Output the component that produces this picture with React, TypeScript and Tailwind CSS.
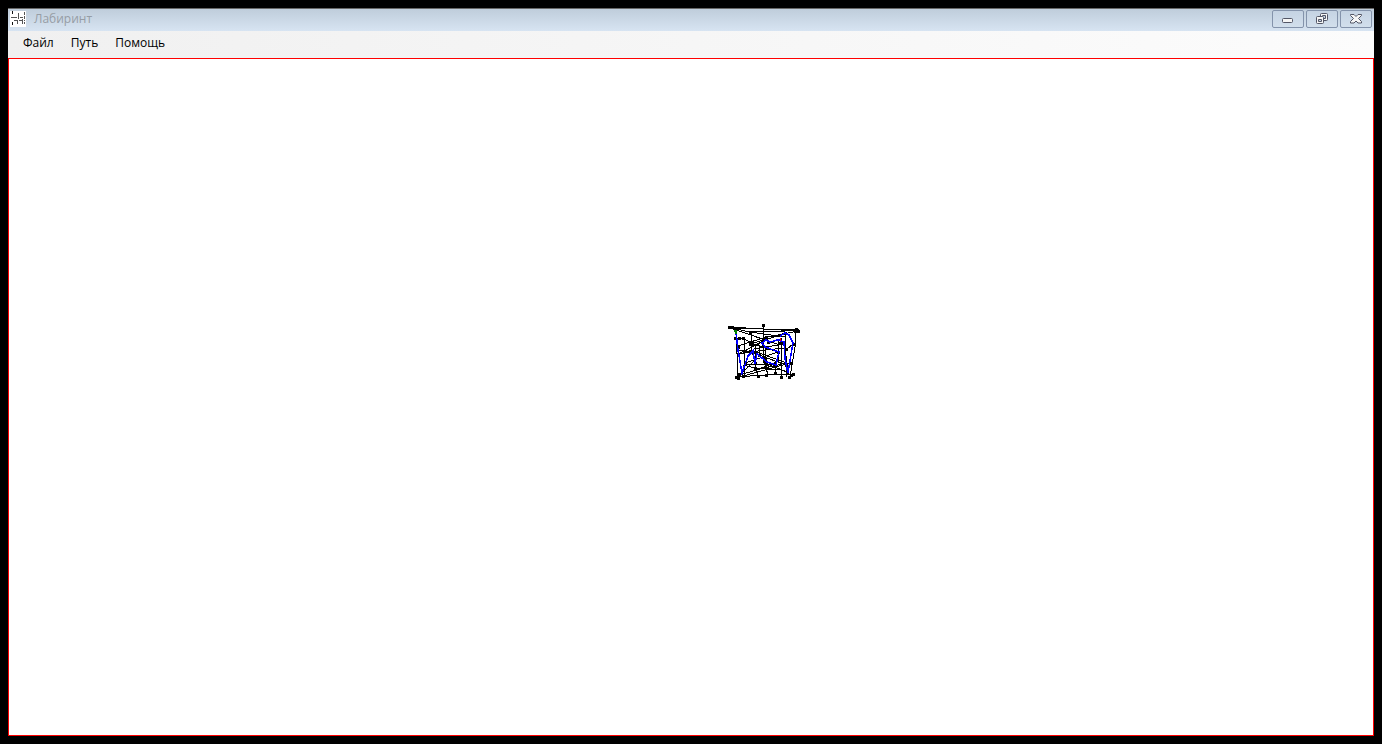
import React from "react";

type Point = [number, number];

const nodes: Point[] = [
  [729, 327], [732, 327], [734, 328], [763, 325], [797, 330], [798, 331], [795, 331], [796, 329],
  [735, 338], [739, 338], [743, 338], [750, 332], [751, 343], [750, 344], [752, 344], [744, 351],
  [738, 347], [738, 354], [766, 337], [764, 339], [763, 346], [768, 342], [780, 343],
  [784, 343], [785, 333], [793, 344], [778, 352], [786, 349], [759, 355], [764, 361],
  [766, 363], [755, 368], [745, 364], [754, 352], [763, 357], [755, 363], [775, 363],
  [736, 377], [738, 378], [739, 374], [743, 376], [758, 376], [766, 375], [775, 373],
  [781, 377], [789, 377], [793, 374], [791, 375], [790, 363], [787, 372], [786, 365],
  [750, 351], [765, 359], [783, 342], [745, 351],
];

const corridors =
  "M729 327L798 331M735 328L763 329L798 330M736 329L750 332L785 337M736 330L780 345" +
  "M736 331L738 377M744 338V376M751 332V346L758 376M763 325V357L768 375" +
  "M736 338H743L751 343M738 346L763 338L798 331M744 351L737 355M744 351L765 340L785 333" +
  "M750 332L786 331M750 344L781 335M751 343L778 352M754 349L784 344L786 350L793 344" +
  "M796 331L795 347L790 377M785 333L787 377M781 338V377M778 340V363" +
  "M745 364H755V347L766 338M737 354L765 350L786 348M759 345V355L786 365" +
  "M735 377L766 375L793 374M739 375L764 368L787 363M743 376L790 363M758 369L775 363" +
  "M745 363L763 357L778 352M754 358V364H775M765 363L787 372M765 347V363" +
  "M738 350L759 353L790 364M743 365L755 368L781 370M775 374L775 363M743 372L755 360";

export default function App() {
  return (
    <div className="flex h-screen flex-col bg-black px-2 pt-2 pb-2 font-['Open_Sans','Noto_Sans',sans-serif] text-xs">
      <main className="flex min-h-0 flex-1 flex-col border-t border-[#686868] bg-[#f0f0f0]">
        <header className="flex h-[22px] shrink-0 items-center bg-linear-to-b from-[#bfcddb] to-[#d7e4f2] px-0.5 pb-0.5">
          <svg width="16" height="16" viewBox="0 0 16 16" shapeRendering="crispEdges" aria-hidden="true">
            <path fill="#fff" d="M0 0h16v16H0z" />
            <path
              stroke="#555"
              fill="none"
              d="M8.5 2v6M14.5 1v3M1 6.5h6M10 6.5h2M14.5 5v3M12 6.5h1M4 9.5h3M7.5 9v4M9 9.5h3M12.5 8v5M14 9.5h1M14.5 11v2"
            />
            <path stroke="#111" fill="none" d="M2.5 0v3M2.5 11v3" />
          </svg>
          <h1 className="ml-2 flex-1 text-[#969da5]">Лабиринт</h1>
          <div className="flex gap-0.5">
            <button aria-label="Свернуть" className="flex h-[18px] w-8 items-center justify-center rounded-xs border border-[#8493ab] bg-linear-to-b from-[#c5d3e3] to-[#d2dfec]">
              <svg width="12" height="12" viewBox="0 0 12 12" aria-hidden="true">
                <rect x=".5" y="5.5" width="10" height="4" rx="1" fill="#f5f5f5" stroke="#535666" />
              </svg>
            </button>
            <button aria-label="Восстановить" className="flex h-[18px] w-8 items-center justify-center rounded-xs border border-[#8493ab] bg-linear-to-b from-[#c5d3e3] to-[#d2dfec]">
              <svg width="12" height="12" viewBox="0 0 12 12" fill="#f5f5f5" stroke="#535666" aria-hidden="true">
                <rect x="4.5" y=".5" width="7" height="7" rx="1" />
                <path fill="#c5d3e3" d="M6.5 2.5h3v3h-3z" />
                <rect x=".5" y="3.5" width="7" height="7" rx="1" />
                <path fill="#c5d3e3" d="M2.5 6.5h3v2h-3z" />
              </svg>
            </button>
            <button aria-label="Закрыть" className="flex h-[18px] w-8 items-center justify-center rounded-xs border border-[#8493ab] bg-linear-to-b from-[#c5d3e3] to-[#d2dfec]">
              <svg width="12" height="12" viewBox="0 0 12 12" aria-hidden="true">
                <path
                  fill="#f5f5f5"
                  stroke="#535666"
                  strokeLinejoin="round"
                  d="M.5 1.5h3.500L6 3.500l2-2h3.500v1L8.500 5.500l3 3v1.500H8L6 8l-2 2H.5V8.500l3-3-3-3z"
                />
              </svg>
            </button>
          </div>
        </header>
        <nav className="flex h-[27px] shrink-0 items-center gap-[17px] bg-linear-to-r from-[#f0f0f0] to-[#fcfcfc] pb-[3px] pl-[15px] text-black">
          <button>Файл</button>
          <button>Путь</button>
          <button>Помощь</button>
        </nav>
        <section aria-label="Лабиринт" className="relative min-h-0 flex-1 border border-[#ff0000] bg-white">
          <svg
            className="absolute top-[259px] left-[713px]"
            width="82"
            height="66"
            viewBox="722 318 82 66"
            shapeRendering="crispEdges"
            fill="none"
            role="img"
            aria-label="Граф лабиринта"
          >
            <path stroke="#000" d={corridors} />
            {nodes.map(([x, y]) => (
              <rect key={`${x}-${y}`} x={x - 1} y={y - 1} width="3" height="3" fill="#000" />
            ))}
            <path
              stroke="#0000ff"
              strokeWidth="1.5"
              d="M736 333L738 350L742 373L748 356L753 351L755 364L757 354L767 362L776 365L779 352L765 347L762 343L766 340L770 342L781 339M780 336L785 333L789 335L793 343L788 373L785 359L784 342L778 340"
            />
            <path fill="#008000" d="M734 330h3v4h-2v-2h-1z" />
            <path stroke="#ff0000" d="M780.5 338v3" />
          </svg>
        </section>
      </main>
    </div>
  );
}
